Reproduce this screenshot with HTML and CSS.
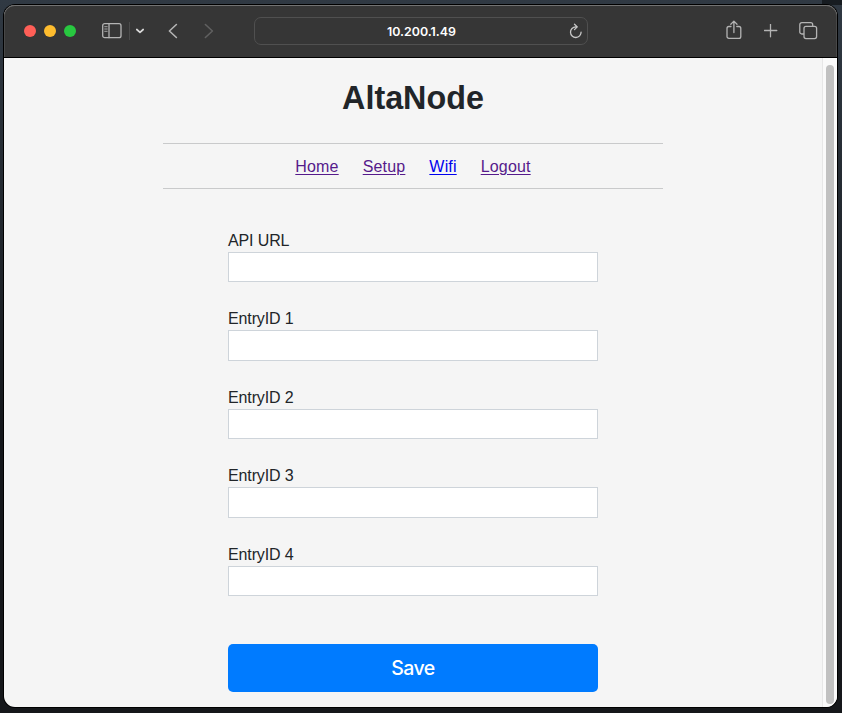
FILE: index.html
```html
<!DOCTYPE html>
<html lang="en">
<head>
<meta charset="utf-8">
<title>AltaNode</title>
<link rel="stylesheet" href="styles.css">
</head>
<body>
<div class="window">
  <header class="toolbar">
    <div class="lights"><span class="light red"></span><span class="light yellow"></span><span class="light green"></span></div>
    <svg class="icon sidebar" width="20" height="16" viewBox="0 0 20 16"><rect x=".7" y=".7" width="18.3" height="14" rx="2"/><path d="M7 .7v14"/><path class="thin" d="M2.7 3.7h2.5M2.7 6h2.5M2.7 8.3h2.5"/></svg>
    <span class="divider"></span>
    <svg class="icon chevron" width="10" height="6" viewBox="0 0 10 6"><path d="M1.8 1.5 5 4.3l3.2-2.8"/></svg>
    <svg class="icon back" width="10" height="16" viewBox="0 0 10 16"><path d="M8.4 1.5 1.4 8l7 6.5"/></svg>
    <svg class="icon forward" width="10" height="16" viewBox="0 0 10 16"><path d="m1.4 1.5 7 6.5-7 6.5"/></svg>
    <div class="address">
      <span class="host">10.200.1.49</span>
      <svg class="icon reload" width="14" height="16" viewBox="0 0 14 16"><path d="M7.8 3.9H6.7a5.3 5.3 0 1 0 5.4 5.2M5.5 1.2 8.3 3.9 5.5 6.6"/></svg>
    </div>
    <svg class="icon share" width="16" height="20" viewBox="0 0 16 20"><path d="M5 6.5H2.9A1.9 1.9 0 0 0 1 8.4v8a1.9 1.9 0 0 0 1.900 1.900h10a1.900 1.900 0 0 0 1.900-1.900v-8a1.900 1.900 0 0 0-1.900-1.900h-2.100M7.900 12.500V1.300M4.800 4.200 7.900 1.100 11 4.200"/></svg>
    <svg class="icon plus" width="14" height="14" viewBox="0 0 14 14"><path d="M6.500 .3v12.500M.3 6.500h12.500"/></svg>
    <svg class="icon tabs" width="19" height="18" viewBox="0 0 19 18"><path d="M4.600 12H2.800a2 2 0 0 1-2-2V2.700a2 2 0 0 1 2-2h8.900a2 2 0 0 1 2 2v1.600"/><rect x="5" y="4.300" width="12.600" height="12.300" rx="2"/></svg>
  </header>
  <div class="viewport">
    <main class="page">
      <h1>AltaNode</h1>
      <nav><a class="seen" href="#">Home</a><a class="seen" href="#">Setup</a><a href="#">Wifi</a><a class="seen" href="#">Logout</a></nav>
      <form>
        <label>API URL<input type="text"></label>
        <label>EntryID 1<input type="text"></label>
        <label>EntryID 2<input type="text"></label>
        <label>EntryID 3<input type="text"></label>
        <label>EntryID 4<input type="text"></label>
        <button type="button">Save</button>
      </form>
    </main>
    <div class="scrollbar"><div class="thumb"></div></div>
  </div>
</div>
</body>
</html>
```
FILE: styles.css
```css
* { box-sizing: border-box; }
html { height: 100%; }
body {
  margin: 0;
  height: 713px;
  padding: 5px 5px 6px 4px;
  overflow: hidden;
  background: linear-gradient(90deg, transparent 822px, #171c21 822px) 0 0 / 100% 5px no-repeat, linear-gradient(#303943, #14171b 60%, #15171a);
  font-family: "Liberation Sans", Arial, sans-serif;
  color: #212529;
}
.window {
  display: flex;
  flex-direction: column;
  height: 702px;
  border-radius: 11px;
  overflow: hidden;
  background: #f5f5f5;
  box-shadow: 0 0 0 1px #000;
}
.toolbar {
  display: flex;
  align-items: center;
  flex: none;
  height: 53px;
  padding-left: 20px;
  background: #363636;
  border-bottom: 1px solid #000;
  border-radius: 11px 11px 0 0;
  box-shadow: inset 0 1px 0 #737373, inset 1px 0 0 #484848, inset -1px 0 0 #484848;
}
.lights { display: flex; gap: 8px; }
.light { width: 12px; height: 12px; border-radius: 50%; }
.red { background: #ff5f57; }
.yellow { background: #febc2e; }
.green { background: #28c840; }
.icon {
  flex: none;
  fill: none;
  stroke: #b4b4b4;
  stroke-width: 1.3;
  stroke-linecap: round;
  stroke-linejoin: round;
}
.sidebar { margin-left: 26px; }
.thin { stroke-width: .9; }
.divider { width: 1px; height: 18px; margin-left: 7px; background: #4b4b4b; }
.chevron { margin-left: 5px; stroke: #d8d8d8; stroke-width: 1.7; }
.back { margin-left: 23px; stroke-width: 1.6; }
.forward { margin-left: 26px; stroke: #606060; stroke-width: 1.6; }
.address {
  display: flex;
  align-items: center;
  width: 334px;
  height: 28px;
  margin-left: 40px;
  padding: 0 4px 0 19px;
  border: 1px solid #505050;
  border-radius: 7px;
}
.host {
  flex: 1;
  text-align: center;
  font: 600 12.4px Inter, sans-serif;
  color: #fff;
}
.reload { stroke: #c8c8c8; }
.share { margin: -2px 0 0 138px; }
.plus { margin-left: 22px; }
.tabs { margin-left: 21px; }
.viewport { display: flex; flex: 1; min-height: 0; }
.page { flex: 1; }
h1 {
  margin: 22px 0 27px;
  font-size: 32.3px;
  line-height: 36px;
  text-align: center;
}
nav {
  display: flex;
  justify-content: center;
  gap: 24px;
  width: 500px;
  height: 46px;
  margin: 0 auto 41px;
  padding-top: 13px;
  border: solid #c9cacb;
  border-width: 1px 0;
  font-size: 16px;
  line-height: 20px;
  letter-spacing: .17px;
}
a { color: #00e; text-underline-offset: 2px; }
.seen { color: #551a8b; }
form { width: 370px; margin: 0 auto; }
label {
  display: block;
  height: 78.4px;
  font-size: 16px;
  line-height: 22px;
  letter-spacing: -.12px;
}
input {
  display: block;
  width: 100%;
  height: 30.4px;
  padding: 4px 8px;
  border: 1px solid #ced4da;
  background: #fff;
}
button {
  display: block;
  width: 100%;
  height: 48px;
  margin-top: 22px;
  padding: 0;
  border: 0;
  border-radius: 5px;
  background: #007bff;
  color: #fff;
  font: 500 19.5px Inter, sans-serif;
  letter-spacing: -.6px;
}
.scrollbar {
  width: 15px;
  padding: 7px 3px 3px;
  border-left: 1px solid #e7e7e7;
  background: #fafafa;
}
.thumb { width: 8px; height: 100%; border-radius: 4px; background: #c1c1c1; }
```
